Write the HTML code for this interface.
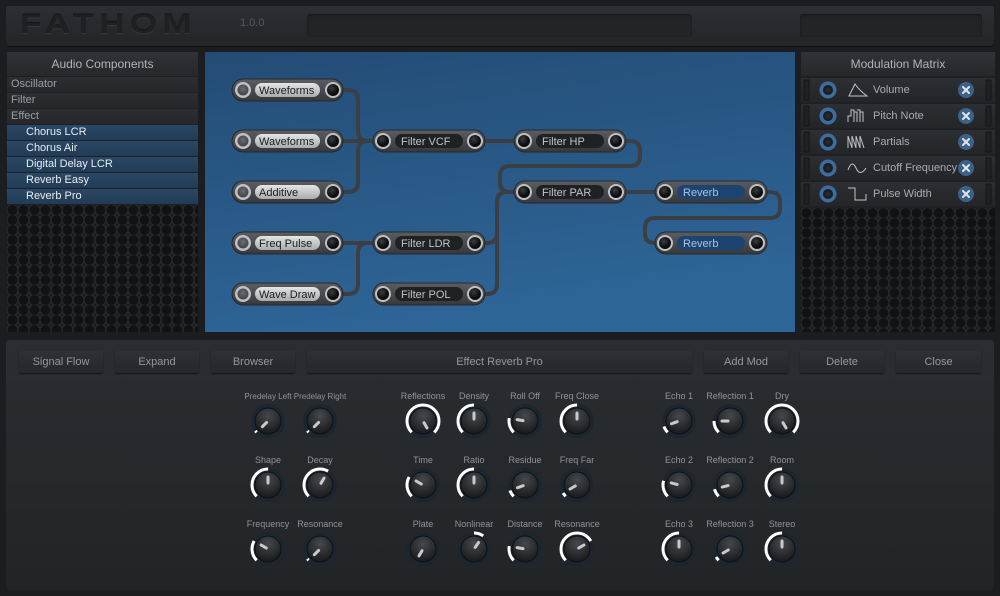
<!DOCTYPE html>
<html><head><meta charset="utf-8"><style>
*{margin:0;padding:0;box-sizing:border-box}
body{width:1000px;height:596px;background:#1b1d20;font-family:"Liberation Sans",sans-serif;position:relative;overflow:hidden}
.abs{position:absolute}
.top{left:6px;top:6px;width:988px;height:40px;background:linear-gradient(#2c2f33,#232528);border-radius:3px;box-shadow:0 1px 0 #111}
.logo{left:20px;top:9px;font:bold 27px "Liberation Sans",sans-serif;letter-spacing:4px;color:#1e2023;text-shadow:0 1px 0 #34373b,0 -1px 0 #131415;transform:scaleX(1.3);transform-origin:left}
.fld{background:#222427;border-radius:3px;box-shadow:inset 0 1px 2px #141516}
.panel{background:#1e2023}
.hdr{background:linear-gradient(#303337,#26282b);color:#b0b4b8;font-size:12px;text-align:center;line-height:24px}
.row{height:15px;font-size:11px;line-height:15px;padding-left:4px;color:#9a9ea2;background:linear-gradient(#2c2e31,#25272a);margin-bottom:1px}
.row.b{background:linear-gradient(#2a4866,#223b55);color:#e8ecf0;padding-left:19px}
.grille{background-color:#1a1b1d;background-image:radial-gradient(circle at 50% 50%,#111213 0,#111213 4.5px,#2c2e31 5.5px,#1a1b1d 6.5px);background-size:11px 10px}
.mrow{height:24px;margin-bottom:2px;background:linear-gradient(#2c2f33,#232528);position:relative;color:#a8acb0;font-size:11px;line-height:24px}
.btn{top:351px;height:22px;background:linear-gradient(#2e3135,#25272a);border-radius:2px;box-shadow:0 1px 1px #141516;color:#94989c;font-size:11px;text-align:center;line-height:22px}
svg text{font-family:"Liberation Sans",sans-serif}
</style></head><body>
<div class="abs top"></div>
<div class="abs logo">FATHOM</div>
<div class="abs" style="left:240px;top:17px;color:#55585c;font-size:11px">1.0.0</div>
<div class="abs fld" style="left:307px;top:14px;width:385px;height:23px"></div>
<div class="abs fld" style="left:800px;top:14px;width:182px;height:23px"></div>

<div class="abs panel" style="left:7px;top:52px;width:191px;height:280px">
<div class="hdr" style="height:24px;margin-bottom:1px">Audio Components</div>
<div class="row">Oscillator</div><div class="row">Filter</div><div class="row">Effect</div>
<div class="row b">Chorus LCR</div><div class="row b">Chorus Air</div><div class="row b">Digital Delay LCR</div><div class="row b">Reverb Easy</div><div class="row b">Reverb Pro</div>
<div class="grille" style="height:127px"></div>
</div>

<div class="abs panel" style="left:801px;top:52px;width:194px;height:280px">
<div class="hdr" style="height:24px;margin-bottom:2px">Modulation Matrix</div>
<div class="mrow"><span style="position:absolute;left:72px">Volume</span></div>
<div class="mrow"><span style="position:absolute;left:72px">Pitch Note</span></div>
<div class="mrow"><span style="position:absolute;left:72px">Partials</span></div>
<div class="mrow"><span style="position:absolute;left:72px">Cutoff Frequency</span></div>
<div class="mrow"><span style="position:absolute;left:72px">Pulse Width</span></div>
<div class="grille" style="height:124px"></div>
</div>
<svg class="abs" style="left:801px;top:78px" width="194" height="130">
<defs><radialGradient id="bj"><stop offset="0" stop-color="#2b2e33"/><stop offset="1" stop-color="#16181a"/></radialGradient></defs>
<g fill="none" stroke="#c0c4c8" stroke-width="1">
<g><path d="M48 18 L54 6 Q58 12 66 18 Z"/></g>
<g transform="translate(0,26)"><path d="M47 18 V12 H50 V6 H53 V18 M53 8 H56 V18 M56 6 H59 V18 M59 8 H62 V18"/></g>
<g transform="translate(0,52)"><path d="M47 18 V6 L51 18 V6 L55 18 V6 L59 18 V6 L63 18"/></g>
<g transform="translate(0,78)"><path d="M47 14 Q51 3 55 12 T65 12"/></g>
<g transform="translate(0,104)"><path d="M47 6 H54 V18 H65 V12"/></g>
</g>
<g stroke="#141516" stroke-width="1" fill="#1f2124">
<rect x="3" y="2" width="5" height="20"/><rect x="185" y="2" width="5" height="20"/>
<rect x="3" y="28" width="5" height="20"/><rect x="185" y="28" width="5" height="20"/>
<rect x="3" y="54" width="5" height="20"/><rect x="185" y="54" width="5" height="20"/>
<rect x="3" y="80" width="5" height="20"/><rect x="185" y="80" width="5" height="20"/>
<rect x="3" y="106" width="5" height="20"/><rect x="185" y="106" width="5" height="20"/>
</g>
<g>
<circle cx="27" cy="12" r="8.5" fill="#3d6d9e"/><circle cx="27" cy="12" r="5" fill="url(#bj)"/>
<circle cx="27" cy="38" r="8.5" fill="#3d6d9e"/><circle cx="27" cy="38" r="5" fill="url(#bj)"/>
<circle cx="27" cy="64" r="8.5" fill="#3d6d9e"/><circle cx="27" cy="64" r="5" fill="url(#bj)"/>
<circle cx="27" cy="90" r="8.5" fill="#3d6d9e"/><circle cx="27" cy="90" r="5" fill="url(#bj)"/>
<circle cx="27" cy="116" r="8.5" fill="#3d6d9e"/><circle cx="27" cy="116" r="5" fill="url(#bj)"/>
</g>
<g stroke="#dfe6ee" stroke-width="2" stroke-linecap="round">
<circle cx="165" cy="12" r="8" fill="#3c6288" stroke="none"/><path d="M162 9l6 6M168 9l-6 6"/>
<circle cx="165" cy="38" r="8" fill="#3c6288" stroke="none"/><path d="M162 35l6 6M168 35l-6 6"/>
<circle cx="165" cy="64" r="8" fill="#3c6288" stroke="none"/><path d="M162 61l6 6M168 61l-6 6"/>
<circle cx="165" cy="90" r="8" fill="#3c6288" stroke="none"/><path d="M162 87l6 6M168 87l-6 6"/>
<circle cx="165" cy="116" r="8" fill="#3c6288" stroke="none"/><path d="M162 113l6 6M168 113l-6 6"/>
</g>
</svg>

<svg class="abs" style="left:0;top:0" width="1000" height="340">
<defs>
<linearGradient id="bg" x1="0" y1="0" x2="0.3" y2="1"><stop offset="0" stop-color="#234c75"/><stop offset="1" stop-color="#2e6597"/></linearGradient>
<linearGradient id="pill" x1="0" y1="0" x2="0" y2="1"><stop offset="0" stop-color="#5a5d62"/><stop offset="1" stop-color="#36383c"/></linearGradient>
<linearGradient id="lf" x1="0" y1="0" x2="0" y2="1"><stop offset="0" stop-color="#e4e5e6"/><stop offset="1" stop-color="#a9abad"/></linearGradient>
<radialGradient id="jk" cx="0.4" cy="0.35"><stop offset="0" stop-color="#3a3c40"/><stop offset="1" stop-color="#0c0d0e"/></radialGradient>
<radialGradient id="jh" cx="0.5" cy="0.4"><stop offset="0" stop-color="#6a6d71"/><stop offset="1" stop-color="#45484c"/></radialGradient>
</defs>
<rect x="205" y="52" width="590" height="280" fill="url(#bg)"/>
<g fill="none" stroke="#3b3e42" stroke-width="4" stroke-linejoin="round" stroke-linecap="round">
<path d="M333 90 H348 Q358 90 358 100 V131 Q358 141 368 141 H383"/>
<path d="M333 141 H383"/>
<path d="M333 192 H348 Q358 192 358 182 V151 Q358 141 368 141"/>
<path d="M475 141 H524"/>
<path d="M615 141 H630 Q640 141 640 151 V156 Q640 166 630 166 H510 Q500 166 500 176 V182 Q500 192 510 192 H524"/>
<path d="M333 243 H383"/>
<path d="M333 294 H348 Q358 294 358 284 V253 Q358 243 368 243"/>
<path d="M475 243 H487 Q497 243 497 233 V202 Q497 192 507 192 H524"/>
<path d="M475 294 H487 Q497 294 497 284 V202"/>
<path d="M615 192 H665"/>
<path d="M756 192 H770 Q780 192 780 202 V208 Q780 218 770 218 H655 Q645 218 645 228 V233 Q645 243 655 243 H665"/>
</g>
<g id="n1">
<rect x="232" y="79" width="111" height="22" rx="11" fill="url(#pill)" stroke="#26282b"/>
<circle cx="243" cy="90" r="8" fill="#bfc1c3"/><circle cx="243" cy="90" r="5.5" fill="url(#jh)"/>
<rect x="255" y="83" width="65" height="14" rx="7" fill="url(#lf)"/>
<circle cx="333" cy="90" r="8" fill="#bfc1c3"/><circle cx="333" cy="90" r="6" fill="url(#jk)"/>
</g>
<use href="#n1" y="51"/><use href="#n1" y="102"/><use href="#n1" y="153"/><use href="#n1" y="204"/>
<g font-size="11" fill="#1a1b1c">
<text x="259" y="94">Waveforms</text><text x="259" y="145">Waveforms</text><text x="259" y="196">Additive</text><text x="259" y="247">Freq Pulse</text><text x="259" y="298">Wave Draw</text>
</g>
<g id="f1">
<rect x="373" y="130" width="112" height="22" rx="11" fill="url(#pill)" stroke="#26282b"/>
<circle cx="383" cy="141" r="8" fill="#bfc1c3"/><circle cx="383" cy="141" r="6" fill="url(#jk)"/>
<rect x="395" y="134" width="68" height="14" rx="7" fill="#1f2123"/>
<circle cx="475" cy="141" r="8" fill="#bfc1c3"/><circle cx="475" cy="141" r="6" fill="url(#jk)"/>
</g>
<use href="#f1" y="102"/><use href="#f1" y="153"/><use href="#f1" x="141"/><use href="#f1" x="141" y="51"/>
<g id="r1">
<rect x="655" y="181" width="112" height="22" rx="11" fill="url(#pill)" stroke="#26282b"/>
<circle cx="665" cy="192" r="8" fill="#bfc1c3"/><circle cx="665" cy="192" r="6" fill="url(#jk)"/>
<rect x="677" y="185" width="68" height="14" rx="7" fill="#1d4470"/>
<circle cx="757" cy="192" r="8" fill="#bfc1c3"/><circle cx="757" cy="192" r="6" fill="url(#jk)"/>
</g>
<use href="#r1" y="51"/>
<g font-size="11" fill="#c0c4c8">
<text x="401" y="145">Filter VCF</text><text x="401" y="247">Filter LDR</text><text x="401" y="298">Filter POL</text>
<text x="542" y="145">Filter HP</text><text x="542" y="196">Filter PAR</text>
</g>
<g font-size="11" fill="#a9c4e2"><text x="683" y="196">Reverb</text><text x="683" y="247">Reverb</text></g>
</svg>

<div class="abs" style="left:6px;top:340px;width:988px;height:250px;background:linear-gradient(#2a2d31,#222427);border-radius:3px"></div>
<div class="abs btn" style="left:19px;width:84px">Signal Flow</div>
<div class="abs btn" style="left:115px;width:84px">Expand</div>
<div class="abs btn" style="left:211px;width:84px">Browser</div>
<div class="abs btn" style="left:307px;width:385px">Effect Reverb Pro</div>
<div class="abs btn" style="left:704px;width:84px">Add Mod</div>
<div class="abs btn" style="left:800px;width:84px">Delete</div>
<div class="abs btn" style="left:896px;width:85px">Close</div>

<svg class="abs" style="left:0;top:0" width="1000" height="596">
<defs><radialGradient id="kb" cx="0.5" cy="0.3" r="0.7"><stop offset="0" stop-color="#45484d"/><stop offset="1" stop-color="#18191b"/></radialGradient>
<g id="kbase"><circle r="17" fill="#1c2630"/><circle r="13" fill="url(#kb)" stroke="#0f1011" stroke-width="1"/></g></defs>
<style>.a{fill:none;stroke:#fff;stroke-width:3}.i{stroke:#c8cacc;stroke-width:3;stroke-linecap:round}</style>
<g font-size="9" fill="#909498" text-anchor="middle">
<text x="268" y="399" font-size="8">Predelay Left</text><text x="320" y="399" font-size="8">Predelay Right</text>
<text x="268" y="463">Shape</text><text x="320" y="463">Decay</text>
<text x="268" y="527">Frequency</text><text x="320" y="527">Resonance</text>
<text x="423" y="399">Reflections</text><text x="474" y="399">Density</text><text x="525" y="399">Roll Off</text><text x="577" y="399">Freq Close</text>
<text x="423" y="463">Time</text><text x="474" y="463">Ratio</text><text x="525" y="463">Residue</text><text x="577" y="463">Freq Far</text>
<text x="423" y="527">Plate</text><text x="474" y="527">Nonlinear</text><text x="525" y="527">Distance</text><text x="577" y="527">Resonance</text>
<text x="679" y="399">Echo 1</text><text x="730" y="399">Reflection 1</text><text x="782" y="399">Dry</text>
<text x="679" y="463">Echo 2</text><text x="730" y="463">Reflection 2</text><text x="782" y="463">Room</text>
<text x="679" y="527">Echo 3</text><text x="730" y="527">Reflection 3</text><text x="782" y="527">Stereo</text>
</g>
<g transform="translate(268,421)"><use href="#kbase"/><circle r="16" class="a" stroke-dasharray="2 200" transform="rotate(135)"/><line class="i" y1="-2" y2="-8" transform="rotate(-135)"/></g>
<g transform="translate(320,421)"><use href="#kbase"/><circle r="16" class="a" stroke-dasharray="2 200" transform="rotate(135)"/><line class="i" y1="-2" y2="-8" transform="rotate(-135)"/></g>
<g transform="translate(268,485)"><use href="#kbase"/><circle r="16" class="a" stroke-dasharray="37.7 200" transform="rotate(135)"/><line class="i" y1="-2" y2="-8"/></g>
<g transform="translate(320,485)"><use href="#kbase"/><circle r="16" class="a" stroke-dasharray="46.1 200" transform="rotate(135)"/><line class="i" y1="-2" y2="-8" transform="rotate(30)"/></g>
<g transform="translate(268,549)"><use href="#kbase"/><circle r="16" class="a" stroke-dasharray="20.9 200" transform="rotate(135)"/><line class="i" y1="-2" y2="-8" transform="rotate(-60)"/></g>
<g transform="translate(320,549)"><use href="#kbase"/><circle r="16" class="a" stroke-dasharray="2 200" transform="rotate(135)"/><line class="i" y1="-2" y2="-8" transform="rotate(-135)"/></g>

<g transform="translate(423,421)"><use href="#kbase"/><circle r="16" class="a" stroke-dasharray="75.4 200" transform="rotate(135)"/><line class="i" y1="-2" y2="-8" transform="rotate(150)"/></g>
<g transform="translate(474,421)"><use href="#kbase"/><circle r="16" class="a" stroke-dasharray="37.7 200" transform="rotate(135)"/><line class="i" y1="-2" y2="-8"/></g>
<g transform="translate(525,421)"><use href="#kbase"/><circle r="16" class="a" stroke-dasharray="15.4 200" transform="rotate(135)"/><line class="i" y1="-2" y2="-8" transform="rotate(-80)"/></g>
<g transform="translate(577,421)"><use href="#kbase"/><circle r="16" class="a" stroke-dasharray="37.7 200" transform="rotate(135)"/><line class="i" y1="-2" y2="-8"/></g>
<g transform="translate(423,485)"><use href="#kbase"/><circle r="16" class="a" stroke-dasharray="20.9 200" transform="rotate(135)"/><line class="i" y1="-2" y2="-8" transform="rotate(-60)"/></g>
<g transform="translate(474,485)"><use href="#kbase"/><circle r="16" class="a" stroke-dasharray="37.7 200" transform="rotate(135)"/><line class="i" y1="-2" y2="-8"/></g>
<g transform="translate(525,485)"><use href="#kbase"/><circle r="16" class="a" stroke-dasharray="7 200" transform="rotate(135)"/><line class="i" y1="-2" y2="-8" transform="rotate(-110)"/></g>
<g transform="translate(577,485)"><use href="#kbase"/><circle r="16" class="a" stroke-dasharray="4.2 200" transform="rotate(135)"/><line class="i" y1="-2" y2="-8" transform="rotate(-120)"/></g>
<g transform="translate(423,549)"><use href="#kbase"/><line class="i" y1="-2" y2="-8" transform="rotate(-150)"/></g>
<g transform="translate(474,549)"><use href="#kbase"/><circle r="16" class="a" stroke-dasharray="9.8 200" transform="rotate(-90)"/><line class="i" y1="-2" y2="-8" transform="rotate(35)"/></g>
<g transform="translate(525,549)"><use href="#kbase"/><circle r="16" class="a" stroke-dasharray="15.4 200" transform="rotate(135)"/><line class="i" y1="-2" y2="-8" transform="rotate(-80)"/></g>
<g transform="translate(577,549)"><use href="#kbase"/><circle r="16" class="a" stroke-dasharray="54.4 200" transform="rotate(135)"/><line class="i" y1="-2" y2="-8" transform="rotate(60)"/></g>

<g transform="translate(679,421)"><use href="#kbase"/><circle r="16" class="a" stroke-dasharray="7 200" transform="rotate(135)"/><line class="i" y1="-2" y2="-8" transform="rotate(-110)"/></g>
<g transform="translate(730,421)"><use href="#kbase"/><circle r="16" class="a" stroke-dasharray="12.6 200" transform="rotate(135)"/><line class="i" y1="-2" y2="-8" transform="rotate(-90)"/></g>
<g transform="translate(782,421)"><use href="#kbase"/><circle r="16" class="a" stroke-dasharray="75.4 200" transform="rotate(135)"/><line class="i" y1="-2" y2="-8" transform="rotate(150)"/></g>
<g transform="translate(679,485)"><use href="#kbase"/><circle r="16" class="a" stroke-dasharray="16.8 200" transform="rotate(135)"/><line class="i" y1="-2" y2="-8" transform="rotate(-75)"/></g>
<g transform="translate(730,485)"><use href="#kbase"/><circle r="16" class="a" stroke-dasharray="8.4 200" transform="rotate(135)"/><line class="i" y1="-2" y2="-8" transform="rotate(-105)"/></g>
<g transform="translate(782,485)"><use href="#kbase"/><circle r="16" class="a" stroke-dasharray="37.7 200" transform="rotate(135)"/><line class="i" y1="-2" y2="-8"/></g>
<g transform="translate(679,549)"><use href="#kbase"/><circle r="16" class="a" stroke-dasharray="37.7 200" transform="rotate(135)"/><line class="i" y1="-2" y2="-8"/></g>
<g transform="translate(730,549)"><use href="#kbase"/><circle r="16" class="a" stroke-dasharray="4.2 200" transform="rotate(135)"/><line class="i" y1="-2" y2="-8" transform="rotate(-120)"/></g>
<g transform="translate(782,549)"><use href="#kbase"/><circle r="16" class="a" stroke-dasharray="37.7 200" transform="rotate(135)"/><line class="i" y1="-2" y2="-8"/></g>
</svg>
</body></html>
